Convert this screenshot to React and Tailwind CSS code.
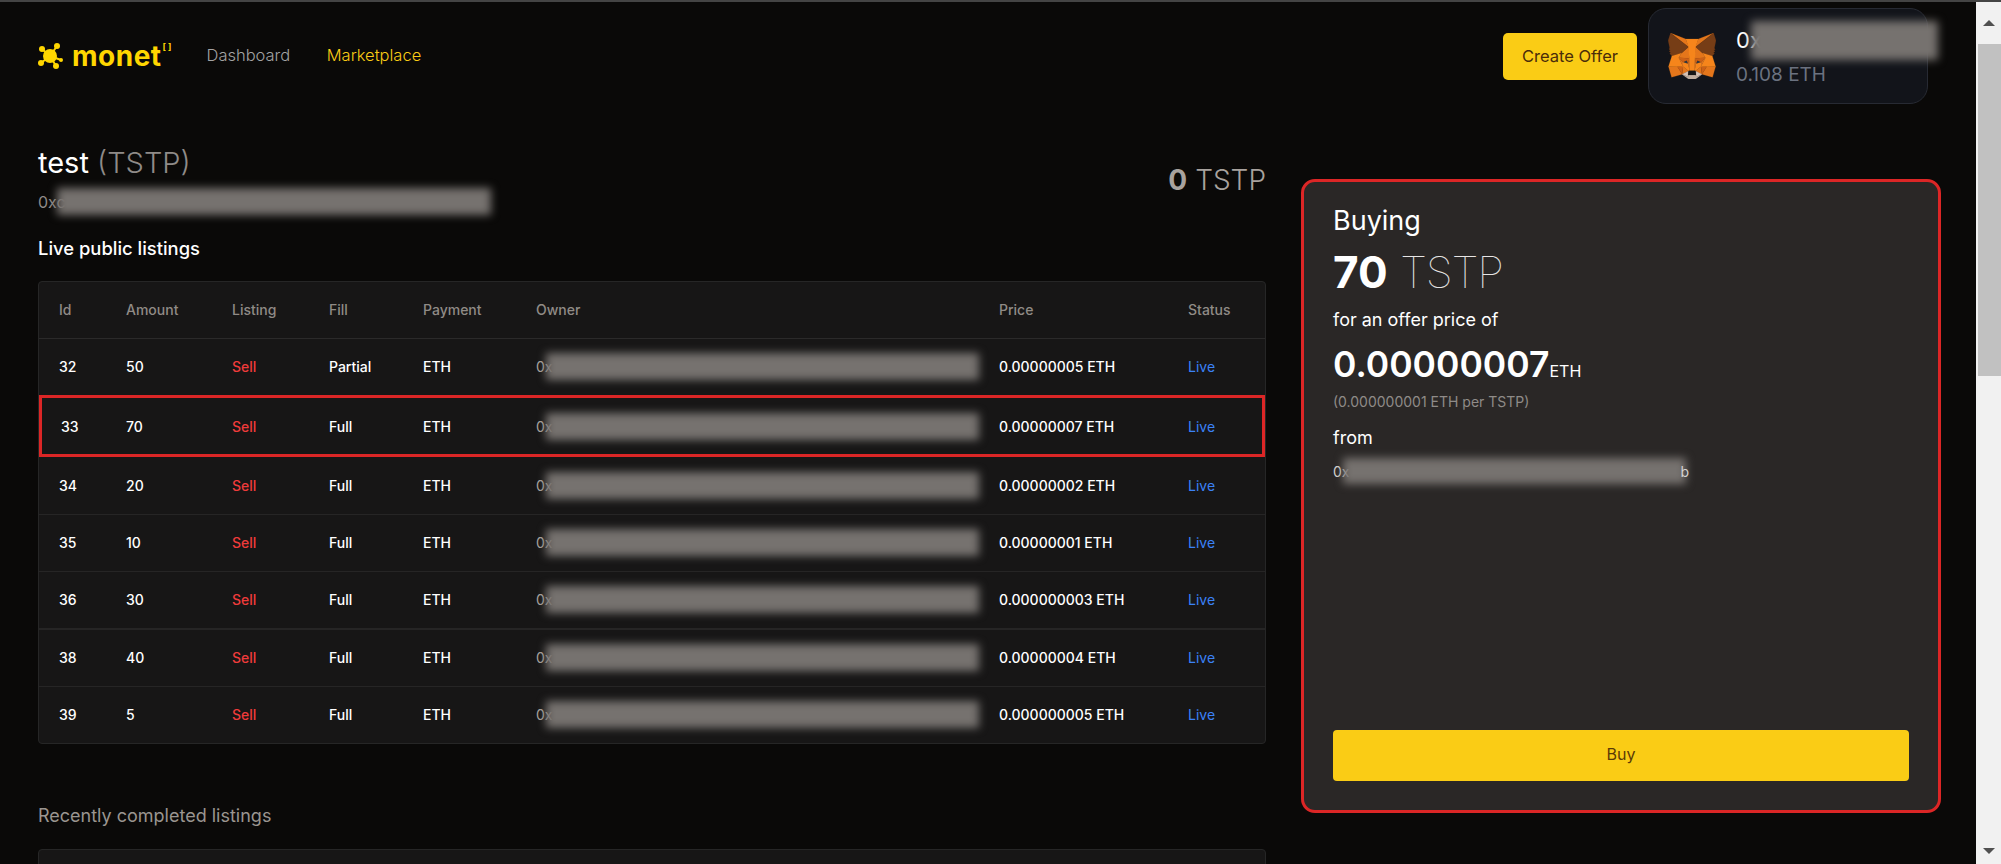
import React from 'react';

const rows = [
  { id: 32, amount: 50, fill: 'Partial', price: '0.00000005 ETH', h: 'h-[57px]' },
  { id: 33, amount: 70, fill: 'Full', price: '0.00000007 ETH', h: 'h-[62px]', picked: true },
  { id: 34, amount: 20, fill: 'Full', price: '0.00000002 ETH', h: 'h-[57px]' },
  { id: 35, amount: 10, fill: 'Full', price: '0.00000001 ETH', h: 'h-[57px]' },
  { id: 36, amount: 30, fill: 'Full', price: '0.000000003 ETH', h: 'h-[58px]', thick: true },
  { id: 38, amount: 40, fill: 'Full', price: '0.00000004 ETH', h: 'h-[57px]' },
  { id: 39, amount: 5, fill: 'Full', price: '0.000000005 ETH', h: 'h-[57px]', last: true },
];

const headers = ['Id', 'Amount', 'Listing', 'Fill', 'Payment', 'Owner', 'Price', 'Status'];

// official fox polygons, simplified to what shows at this size
const foxShapes = [
  ['#E2761B', '274.1,35.5 174.6,109.4 193,65.8'],
  ['#E4761B', '44.4,35.5 143.1,110.1 125.6,65.8'],
  ['#E4761B', '238.3,206.8 211.8,247.4 268.5,263 284.8,207.7'],
  ['#E4761B', '33.9,207.7 50.1,263 106.8,247.4 80.3,206.8'],
  ['#E4761B', '103.6,138.2 87.8,162.1 144.1,164.6 142.1,104.1'],
  ['#E4761B', '214.9,138.2 175.9,103.4 174.6,164.6 230.8,162.1'],
  ['#E4761B', '106.8,247.4 140.6,230.9 111.4,208.1'],
  ['#E4761B', '177.9,230.9 211.8,247.4 207.1,208.1'],
  ['#D7C1B3', '211.8,247.4 177.9,230.9 180.6,253 180.3,262.3'],
  ['#D7C1B3', '106.8,247.4 138.3,262.3 138.1,253 140.6,230.9'],
  ['#233447', '138.8,193.5 110.6,185.2 130.5,176.1'],
  ['#233447', '179.7,193.5 188,176.1 208,185.2'],
  ['#CD6116', '106.8,247.4 111.6,206.8 80.3,207.7'],
  ['#CD6116', '207,206.8 211.8,247.4 238.3,207.7'],
  ['#CD6116', '230.8,162.1 174.6,164.6 179.8,193.5 188.1,176.1 208.1,185.2'],
  ['#CD6116', '110.6,185.2 130.6,176.1 138.8,193.5 144.1,164.6 87.8,162.1'],
  ['#E4751F', '87.8,162.1 111.4,208.1 110.6,185.2'],
  ['#E4751F', '208.1,185.2 207.1,208.1 230.8,162.1'],
  ['#E4751F', '144.1,164.6 138.8,193.5 145.4,227.6 146.9,182.7'],
  ['#E4751F', '174.6,164.6 171.9,182.6 173.1,227.6 179.8,193.5'],
  ['#F6851B', '179.8,193.5 173.1,227.6 177.9,230.9 207.1,208.1 208.1,185.2'],
  ['#F6851B', '110.6,185.2 111.4,208.1 140.6,230.9 145.4,227.6 138.8,193.5'],
  ['#C0AD9E', '180.3,262.3 180.6,253 178.1,250.8 140.4,250.8 138.1,253 138.3,262.3 106.8,247.4 117.8,256.4 140.1,271.9 178.4,271.9 200.8,256.4 211.8,247.4'],
  ['#161616', '177.9,230.9 173.1,227.6 145.4,227.6 140.6,230.9 138.1,253 140.4,250.8 178.1,250.8 180.6,253'],
  ['#763D16', '278.3,114.2 286.8,73.4 274.1,35.5 177.9,106.9 214.9,138.2 267.2,153.5 278.8,140 273.8,136.4 281.8,129.1 275.6,124.3 283.6,118.2'],
  ['#763D16', '31.8,73.4 40.3,114.2 35.2,118 43.2,124.1 37.1,129.1 45.1,136.4 40.1,140 51.6,153.5 103.9,138.2 140.9,106.9 44.4,35.5'],
  ['#F6851B', '267.2,153.5 214.9,138.2 230.8,162.1 207.1,208.1 238.3,207.7 284.8,207.7'],
  ['#F6851B', '103.6,138.2 51.6,153.5 33.9,207.7 80.3,207.7 111.4,208.1 87.8,162.1'],
  ['#F6851B', '174.6,164.6 177.9,106.9 193.1,65.8 125.6,65.8 140.6,106.9 144.1,164.6 145.3,182.8 145.4,227.6 173.1,227.6 173.3,182.8'],
];

const Fox = () => (
  <svg className="w-[48px] h-[46px] shrink-0" viewBox="31 35 256 237" preserveAspectRatio="none">
    {foxShapes.map(([fill, points], i) => (
      <polygon key={i} fill={fill} stroke={fill} strokeWidth="1" points={points} />
    ))}
  </svg>
);

const LogoMark = () => (
  <svg className="w-[26px] h-[26px] shrink-0" viewBox="0 0 26 26" fill="#ffd600" stroke="#ffd600">
    <path d="M12 13 L4 6 M12 13 L19 3 M12 13 L3 20 M12 13 L18 23 M12 13 L23 17" strokeWidth="2" />
    <circle cx="12" cy="13" r="7" stroke="none" />
    <circle cx="4" cy="6" r="3" stroke="none" />
    <circle cx="19" cy="3" r="3" stroke="none" />
    <circle cx="3" cy="20" r="3" stroke="none" />
    <circle cx="18" cy="23" r="3" stroke="none" />
    <circle cx="23" cy="17" r="2" stroke="none" />
  </svg>
);

// redacted part of an address in the screenshot
const Smudge = ({ className }) => <div className={`bg-[#76726f] blur-[4px] ${className}`} />;

const ScrollBar = () => (
  <div className="w-[25px] shrink-0 bg-[#f1f1f1] flex flex-col items-center justify-between">
    <div className="w-full flex flex-col items-end">
      <div className="w-full h-[42px] flex items-center justify-center">
        <div className="w-0 h-0 border-x-[6px] border-x-transparent border-b-[6px] border-b-[#505050]" />
      </div>
      <div className="w-[23px] h-[332px] bg-[#c1c1c1]" />
    </div>
    <div className="w-full h-[26px] flex items-center justify-center">
      <div className="w-0 h-0 border-x-[6px] border-x-transparent border-t-[6px] border-t-[#505050]" />
    </div>
  </div>
);

const rowBorder = row => {
  if (row.picked) return 'outline-[3px] -outline-offset-3 outline-[#dc2626]';
  if (row.thick) return 'border-b-2 border-[#262525]';
  if (row.last) return '';
  return 'border-b border-[#262525]';
};

const ListingsTable = () => (
  <div className="mt-[19px] border border-[#262626] bg-[#171616] rounded-[4px] overflow-hidden">
    <table className="w-full table-fixed text-[14px] text-left">
      <colgroup>
        <col className="w-[67px]" />
        <col className="w-[106px]" />
        <col className="w-[97px]" />
        <col className="w-[94px]" />
        <col className="w-[113px]" />
        <col className="w-[463px]" />
        <col className="w-[189px]" />
        <col className="w-[97px]" />
      </colgroup>
      <thead>
        <tr className="h-[56px] border-b border-[#2b2a2a]">
          {headers.map(h => (
            <th key={h} className="pl-[20px] font-medium text-[#908b86]">{h}</th>
          ))}
        </tr>
      </thead>
      <tbody>
        {rows.map(row => (
          <tr key={row.id} className={`${row.h} ${rowBorder(row)} font-[450] text-white`}>
            <td className={row.picked ? 'pl-[22px]' : 'pl-[20px]'}>{row.id}</td>
            <td className="pl-[20px]">{row.amount}</td>
            <td className="pl-[20px] text-[#ef3b3b]">Sell</td>
            <td className="pl-[20px]">{row.fill}</td>
            <td className="pl-[20px]">ETH</td>
            <td className="pl-[20px]">
              <div className="flex items-center font-normal text-[#a8a29e]">
                <span>0x</span>
                <Smudge className="w-[433px] h-[27px] -ml-[6px]" />
              </div>
            </td>
            <td className="pl-[20px]">{row.price}</td>
            <td className="pl-[20px] font-normal text-[#3b82f6]">Live</td>
          </tr>
        ))}
      </tbody>
    </table>
  </div>
);

const BuyPanel = () => (
  <div className="w-[640px] h-[634px] mt-[32px] shrink-0 flex flex-col bg-[#2a2726] border-[3px] border-[#dc2626] rounded-[14px] pt-[20px] pb-[29px] px-[29px] text-white">
    <div className="text-[27px] leading-[38px]">Buying</div>
    <div className="text-[44px] leading-[56px] mt-[4px]">
      <span className="font-bold">70</span> <span className="font-thin tracking-[-1.25px] text-[#e7e5e4]">TSTP</span>
    </div>
    <div className="text-[18px] leading-[28px] mt-[6px]">for an offer price of</div>
    <div className="flex items-baseline mt-[11px] leading-[40px]">
      <span className="text-[35.5px] font-semibold">0.00000007</span>
      <span className="text-[16px]">ETH</span>
    </div>
    <div className="text-[14px] leading-[20px] mt-[1px] text-[#8f8b88]">(0.000000001 ETH per TSTP)</div>
    <div className="text-[18px] leading-[28px] mt-[12px]">from</div>
    <div className="flex items-center text-[14px] mt-[6px] text-[#d6d3d1]">
      <span>0x</span>
      <Smudge className="w-[343px] h-[26px] -ml-[6px]" />
      <span className="relative -ml-[6px]">b</span>
    </div>
    <button className="mt-auto w-full h-[51px] pb-[3px] bg-[#facc15] rounded-[4px] text-[16px] text-[#5a3a06]">Buy</button>
  </div>
);

export default function App() {
  return (
    <div className="w-[2001px] h-[864px] overflow-hidden flex flex-col bg-[#0a0908] font-['Inter',sans-serif]">
      <div className="h-[2px] shrink-0 bg-[#444444]" />
      <div className="flex flex-1 min-h-0">
        <div className="flex-1 min-w-0">
          {/* top nav */}
          <header className="flex items-center justify-between h-[96px] mt-[6px] pl-[38px] pr-[48px]">
            <div className="flex items-center">
              <LogoMark />
              <div className="ml-[8px] flex items-start">
                <span className="text-[28px] leading-none font-bold tracking-[0.5px] text-[#ffd600]">monet</span>
                <span className="text-[9px] leading-none font-bold text-[#ffd600] ml-[1px]">[ ]</span>
              </div>
              <nav className="flex items-center ml-[35px] gap-[36.5px] pb-[2px] text-[16.5px]">
                <span className="font-light text-[#a3a3a3]">Dashboard</span>
                <span className="font-light text-[#facc15]">Marketplace</span>
              </nav>
            </div>
            <div className="flex items-center gap-[11px]">
              <button className="w-[134px] h-[47px] bg-[#facc15] rounded-[5px] text-[16.5px] text-[#4a2c0a]">Create Offer</button>
              <div className="relative w-[280px] h-[96px] flex items-center gap-[20px] pl-[19px] bg-[#12141a] border border-[#272a33] rounded-[18px]">
                <Fox />
                <div>
                  <div className="text-[22px] leading-[30px] text-white">0x</div>
                  <div className="text-[19px] leading-[26px] mt-[7px] text-[#6b7280]">0.108 ETH</div>
                </div>
                <Smudge className="absolute left-[102px] top-[12px] w-[187px] h-[39px]" />
              </div>
            </div>
          </header>

          <main className="flex items-start gap-[35px] pl-[38px] pt-[43px]">
            <div className="w-[1228px] shrink-0">
              <div className="flex items-center justify-between">
                <div>
                  <div className="text-[29px] leading-[32px] text-white">
                    test <span className="font-light text-[#8f8b88]">(TSTP)</span>
                  </div>
                  <div className="flex items-center mt-[9px] text-[16px] text-[#8f8b88]">
                    <span>0xc</span>
                    <Smudge className="w-[434px] h-[27px] -ml-[9px]" />
                  </div>
                </div>
                <div className="text-[28px] pb-[2px] text-[#a8a29e]">
                  <span className="font-bold">0</span> <span className="font-light">TSTP</span>
                </div>
              </div>
              <h3 className="mt-[19px] text-[18.4px] leading-[28px] font-medium text-white">Live public listings</h3>
              <ListingsTable />
              <h3 className="mt-[58px] text-[18px] leading-[28px] text-[#9a9590]">Recently completed listings</h3>
              <div className="mt-[19px] h-[100px] border border-[#262626] bg-[#171616] rounded-[4px]" />
            </div>
            <BuyPanel />
          </main>
        </div>
        <ScrollBar />
      </div>
    </div>
  );
}
